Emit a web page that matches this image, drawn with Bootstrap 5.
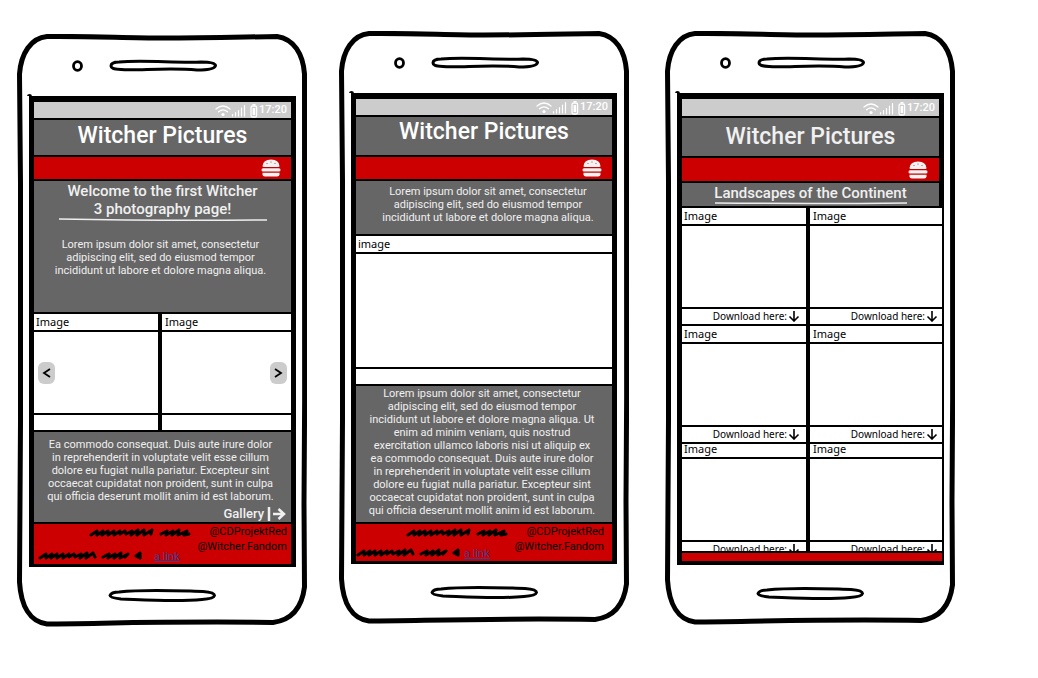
<!DOCTYPE html>
<html lang="en">
<head>
<meta charset="utf-8">
<meta name="viewport" content="width=device-width, initial-scale=1">
<title>Witcher Pictures</title>
<link href="https://cdn.jsdelivr.net/npm/bootstrap@5.3.0/dist/css/bootstrap.min.css" rel="stylesheet">
<style>
  body { font-family: Roboto, "Liberation Sans", sans-serif; background: #fff; color: #000; }
  .board { padding: 31px 83px 50px 17px; gap: 32px; }
  .phone { flex: 1 1 0; min-width: 0; }
  .drop { margin-top: 3px; }
  .outline { inset: 0; width: 100%; height: 100%; overflow: visible; }
  .hardware { display: block; width: 100%; }
  .hw-top { height: 62px; }
  .hw-bottom { height: 60px; }
  .screen { margin: 0 11px 0 12px; border: 5px solid #000; border-top-width: 6px; border-bottom-width: 3px; background: #666; color: #f0f0f0; }
  .wide .screen { margin-right: 12px; }
  .statusbar { height: 16px; background: #ccc; color: #fff; font-size: 11px; line-height: 16px; font-weight: 500; padding-right: 4px; gap: 1px; }
  .strip { border-top: 2px solid #000; }
  .title { height: 40px; }
  .title h1 { font-size: 23px; line-height: 30px; font-weight: 500; margin: 0; color: #fff; }
  .drop .title { height: 37px; }
  .drop h1 { line-height: 32px; }
  .redbar { height: 24px; background: #c00; padding-right: 10px; }
  .burger { background: none; border: 0; padding: 0; line-height: 0; }
  .copy { font-size: 11px; line-height: 13px; font-weight: 400; text-align: center; white-space: nowrap; margin: 0; }
  .intro { height: 133px; }
  .story { height: 90px; padding-top: 6px; }
  .excerpt { height: 55px; }
  .article { height: 136px; padding-top: 1px; }
  .caption { height: 25px; }
  .heading { font-size: 15px; line-height: 18px; font-weight: 500; padding-top: 1px; margin: 0; text-align: center; }
  .foot { background: #c00; color: #000; font-size: 11px; line-height: 15px; height: 42px; }
  .wide .foot { height: 39px; }
  .foot a { color: #3b3f8c; }
  .pair { display: grid; grid-template-columns: 124fr 129fr; gap: 0 4px; background: #000; }
  .tile { background: #fff; color: #000; border-top: 2px solid #000; font-family: "Noto Sans", sans-serif; font-size: 11px; display: flex; flex-direction: column; }
  .tile-head { height: 18px; line-height: 15px; padding-left: 2px; border-bottom: 2px solid #000; }
  .tile:nth-child(even) .tile-head { padding-left: 3px; }
  .tile-body { height: 81px; }
  .tile-foot { height: 17px; border-top: 2px solid #000; }
  .pair.closed { border-bottom: 2px solid #000; }
  .arrow { width: 17px; height: 22px; padding: 0; border: 0; border-radius: 6px; background: #ccc; line-height: 0; margin: 0 4px; }
  .hero .tile-body { height: 113px; }
  .hero { border-bottom: 2px solid #000; }
  .gallery-link { font-size: 13px; line-height: 14px; font-weight: 500; color: #f0f0f0; text-decoration: none; padding-right: 5px; gap: 3px; }
  .grid-wrap { height: 345px; overflow: hidden; }
  .spill { margin-right: -5px; border-right: 2px solid #000; }
  .spill .pair { grid-template-columns: 124fr 132fr; }
  .download { color: #000; text-decoration: none; line-height: 14px; font-size: 10px; padding-right: 6px; gap: 1px; }
  .tile:nth-child(even) .download { padding-right: 4px; }
  .late .tile-head { height: 15px; line-height: 10px; }
  .gallery .statusbar { height: 17px; }
  .gallery .redbar { height: 25px; padding-right: 11px; }
  .gallery h1 { line-height: 38px; color: #f0f0f0; }
  .gallery .screen { border-bottom-width: 4px; }
  .gallery .redline { height: 10px; background: #c00; }
</style>
</head>
<body>
<svg width="0" height="0" class="position-absolute" aria-hidden="true">
  <defs>
    <symbol id="outline" viewBox="0 0 290 593" preserveAspectRatio="none">
      <path d="M30 2.500C70 2 110 4 145 4C190 4 225 3 260 2.500C277 5 286 20 287.500 40C287 200 288.500 330 287 470C287 500 287.500 530 287.500 553C285 573 275 586 256 588.500C160 587 90 589.500 30 590C13 588 4 572 2.500 548C4 410 3.500 300 3.500 150C3 110 2.500 70 2.500 40C4 19 14 4 30 2.500Z" fill="none" stroke="#000" stroke-width="5"/>
    </symbol>
    <symbol id="hwtop" viewBox="0 0 290 62">
      <ellipse cx="60.500" cy="32" rx="4" ry="4.300" fill="none" stroke="#000" stroke-width="2.800"/>
      <path d="M102 28C125 26 160 29 184 28C194 28 198 29 198.500 31.500C198 35 190 36 180 36C150 33 120 37 104 35.500C96 35 94 34 94 32C94 29 97 28 102 28Z" fill="none" stroke="#000" stroke-width="3"/>
      <circle cx="12.500" cy="62.500" r="2.500"/>
    </symbol>
    <symbol id="hwbottom" viewBox="0 0 290 60">
      <path d="M102 25C130 22 165 24 186 24.500C194 25 197.500 26 197.500 28.500C197 31 193 32 185 32.500C160 35 130 33 104 32C96 31 93 30 93 28.500C94 26 97 25 102 25Z" fill="none" stroke="#000" stroke-width="3"/>
    </symbol>
    <symbol id="status" viewBox="0 0 43 16">
      <g fill="none" stroke="#fff" stroke-width="1.300" stroke-linecap="round">
        <path d="M1 7Q8 1 15 7M3.500 9.800Q8 6 12.500 9.800"/>
        <path d="M17.500 14V12.500M20.500 14V10.500M23.500 14V8.500M26.500 14V6M29.500 14V3.500" stroke-width="1.200"/>
        <rect x="36" y="4" width="5.600" height="11" rx="1.500"/>
        <path d="M38 2.600H40"/>
      </g>
      <circle cx="8" cy="12.500" r="1.600" fill="#fff"/>
      <rect x="37.600" y="6" width="2.600" height="7" fill="#fff"/>
    </symbol>
    <symbol id="burger" viewBox="0 0 20 18">
      <g fill="#f2f2f2">
        <path d="M1.500 7Q2 .5 10 .5T18.500 7Q18.500 8 17.500 8H2.500Q1.500 8 1.500 7Z"/>
        <rect x=".5" y="9.300" width="19" height="3.200" rx="1.500"/>
        <path d="M1.500 13.800H18.500V15.500Q18.500 17.500 16 17.500H4Q1.500 17.500 1.500 15.500Z"/>
      </g>
      <g fill="#b33"><circle cx="6" cy="4.500" r=".6"/><circle cx="10" cy="3" r=".6"/><circle cx="14" cy="4.500" r=".6"/></g>
    </symbol>
    <symbol id="scribble" viewBox="0 0 104 9">
      <path d="M2 7L8 3L8 7L14 3L13 7L19 3L19 7L25 3L25 7L31 3L31 6L36 3L37 6L43 3L42 7L49 2L48 7L55 2L55 7L63 2L62 6M72 6L78 3L77 7L84 3L83 7L90 2L89 7L98 3L95 7L100 6" fill="none" stroke="#000" stroke-width="3" stroke-linejoin="round" stroke-linecap="round"/>
    </symbol>
    <symbol id="scribble-short" viewBox="0 0 104 9">
      <path d="M2 7L8 3L8 7L14 3L13 7L19 3L19 7L25 3L25 7L31 3L31 6L36 3L37 6L43 3L42 7L49 2L48 7L55 2L57 6M65 6L71 3L70 7L77 3L76 7L83 2L82 7L90 3L87 6M102 2L98 5L102 7Z" fill="none" stroke="#000" stroke-width="3" stroke-linejoin="round" stroke-linecap="round"/>
    </symbol>
    <symbol id="down" viewBox="0 0 12 12">
      <path d="M6 1V11M1.500 6.500L6 11L10.500 6.500" fill="none" stroke="#000" stroke-width="1.600"/>
    </symbol>
  </defs>
</svg>

<main class="board d-flex align-items-start">

  <section class="phone drop position-relative">
    <svg class="outline position-absolute"><use href="#outline"/></svg>
    <svg class="hardware hw-top"><use href="#hwtop"/></svg>
    <div class="screen position-relative">
      <div class="statusbar d-flex justify-content-end align-items-center"><svg width="43" height="16"><use href="#status"/></svg><span>17:20</span></div>
      <header class="strip title text-center"><h1>Witcher Pictures</h1></header>
      <nav class="strip redbar d-flex justify-content-end align-items-center"><button class="burger" aria-label="Menu"><svg width="20" height="18"><use href="#burger"/></svg></button></nav>
      <div class="strip intro">
        <h2 class="heading">Welcome to the first Witcher<br>3 photography page!</h2>
        <svg class="d-block mx-auto" width="210" height="4"><path d="M1 1Q100 3 209 2" fill="none" stroke="#eee" stroke-width="1.500"/></svg>
        <p class="copy mt-3 pe-1">Lorem ipsum dolor sit amet, consectetur<br>adipiscing elit, sed do eiusmod tempor<br>incididunt ut labore et dolore magna aliqua.</p>
      </div>
      <div class="pair closed">
        <div class="tile"><div class="tile-head">Image</div><div class="tile-body d-flex align-items-center"><button class="arrow" aria-label="Previous"><svg width="11" height="12"><path d="M9 2L3 6L9 10" fill="none" stroke="#000" stroke-width="1.800"/></svg></button></div><div class="tile-foot"></div></div>
        <div class="tile"><div class="tile-head">Image</div><div class="tile-body d-flex align-items-center justify-content-end"><button class="arrow" aria-label="Next"><svg width="11" height="12"><path d="M2 2L8 6L2 10" fill="none" stroke="#000" stroke-width="1.800"/></svg></button></div><div class="tile-foot"></div></div>
      </div>
      <div class="story">
        <p class="copy pe-1">Ea commodo consequat. Duis aute irure dolor<br>in reprehenderit in voluptate velit esse cillum<br>dolore eu fugiat nulla pariatur. Excepteur sint<br>occaecat cupidatat non proident, sunt in culpa<br>qui officia deserunt mollit anim id est laborum.</p>
        <a class="gallery-link d-flex align-items-center justify-content-end mt-1" href="#gallery">Gallery <svg width="19" height="14"><path d="M2 0V14M6 7H17M11.500 2L17 7L11.500 12" fill="none" stroke="#f0f0f0" stroke-width="2.500"/></svg></a>
      </div>
      <footer class="strip foot d-flex">
        <div class="flex-grow-1 d-flex flex-column justify-content-between pt-1">
          <svg class="align-self-end" width="104" height="9"><use href="#scribble"/></svg>
          <div class="d-flex align-items-end ps-1"><svg class="mb-1" width="104" height="9"><use href="#scribble-short"/></svg><a class="ms-2 ps-1" href="#link">a link</a></div>
        </div>
        <div class="text-end pe-1 ps-1">@CDProjektRed<br>@Witcher.Fandom</div>
      </footer>
    </div>
    <svg class="hardware hw-bottom"><use href="#hwbottom"/></svg>
  </section>

  <section class="phone wide position-relative">
    <svg class="outline position-absolute"><use href="#outline"/></svg>
    <svg class="hardware hw-top"><use href="#hwtop"/></svg>
    <div class="screen position-relative">
      <div class="statusbar d-flex justify-content-end align-items-center"><svg width="43" height="16"><use href="#status"/></svg><span>17:20</span></div>
      <header class="strip title text-center"><h1>Witcher Pictures</h1></header>
      <nav class="strip redbar d-flex justify-content-end align-items-center"><button class="burger" aria-label="Menu"><svg width="20" height="18"><use href="#burger"/></svg></button></nav>
      <div class="strip pt-1 excerpt">
        <p class="copy ps-2">Lorem ipsum dolor sit amet, consectetur<br>adipiscing elit, sed do eiusmod tempor<br>incididunt ut labore et dolore magna aliqua.</p>
      </div>
      <div class="tile hero"><div class="tile-head">image</div><div class="tile-body"></div><div class="tile-foot"></div></div>
      <div class="article">
        <p class="copy pe-1">Lorem ipsum dolor sit amet, consectetur<br>adipiscing elit, sed do eiusmod tempor<br>incididunt ut labore et dolore magna aliqua. Ut<br>enim ad minim veniam, quis nostrud<br>exercitation ullamco laboris nisi ut aliquip ex<br>ea commodo consequat. Duis aute irure dolor<br>in reprehenderit in voluptate velit esse cillum<br>dolore eu fugiat nulla pariatur. Excepteur sint<br>occaecat cupidatat non proident, sunt in culpa<br>qui officia deserunt mollit anim id est laborum.</p>
      </div>
      <footer class="strip foot d-flex">
        <div class="flex-grow-1 d-flex flex-column justify-content-between pt-1">
          <svg class="align-self-end" width="104" height="9"><use href="#scribble"/></svg>
          <div class="d-flex align-items-end"><svg class="mb-1" width="104" height="9"><use href="#scribble-short"/></svg><a class="ms-1" href="#link">a link</a></div>
        </div>
        <div class="text-end pe-2 ps-1">@CDProjektRed<br>@Witcher.Fandom</div>
      </footer>
    </div>
    <svg class="hardware hw-bottom"><use href="#hwbottom"/></svg>
  </section>

  <section class="phone gallery position-relative ms-1" id="gallery">
    <svg class="outline position-absolute"><use href="#outline"/></svg>
    <svg class="hardware hw-top"><use href="#hwtop"/></svg>
    <div class="screen position-relative">
      <div class="statusbar d-flex justify-content-end align-items-center"><svg width="43" height="16"><use href="#status"/></svg><span>17:20</span></div>
      <header class="strip title text-center"><h1>Witcher Pictures</h1></header>
      <nav class="strip redbar d-flex justify-content-end align-items-center"><button class="burger" aria-label="Menu"><svg width="20" height="18"><use href="#burger"/></svg></button></nav>
      <div class="strip caption">
        <h2 class="heading">Landscapes of the Continent</h2>
        <svg class="d-block mx-auto" width="194" height="3"><path d="M1 1Q100 2 193 1" fill="none" stroke="#eee" stroke-width="1.500"/></svg>
      </div>
      <div class="spill">
        <div class="grid-wrap">
          <div class="pair">
            <div class="tile"><div class="tile-head">Image</div><div class="tile-body"></div><div class="tile-foot"><a class="download d-flex align-items-center justify-content-end" href="#d1">Download here:<svg width="12" height="12"><use href="#down"/></svg></a></div></div>
            <div class="tile"><div class="tile-head">Image</div><div class="tile-body"></div><div class="tile-foot"><a class="download d-flex align-items-center justify-content-end" href="#d2">Download here:<svg width="12" height="12"><use href="#down"/></svg></a></div></div>
            <div class="tile"><div class="tile-head">Image</div><div class="tile-body"></div><div class="tile-foot"><a class="download d-flex align-items-center justify-content-end" href="#d3">Download here:<svg width="12" height="12"><use href="#down"/></svg></a></div></div>
            <div class="tile"><div class="tile-head">Image</div><div class="tile-body"></div><div class="tile-foot"><a class="download d-flex align-items-center justify-content-end" href="#d4">Download here:<svg width="12" height="12"><use href="#down"/></svg></a></div></div>
            <div class="tile late"><div class="tile-head">Image</div><div class="tile-body"></div><div class="tile-foot"><a class="download d-flex align-items-center justify-content-end" href="#d5">Download here:<svg width="12" height="12"><use href="#down"/></svg></a></div></div>
            <div class="tile late"><div class="tile-head">Image</div><div class="tile-body"></div><div class="tile-foot"><a class="download d-flex align-items-center justify-content-end" href="#d6">Download here:<svg width="12" height="12"><use href="#down"/></svg></a></div></div>
          </div>
        </div>
        <footer class="strip redline"></footer>
      </div>
    </div>
    <svg class="hardware hw-bottom"><use href="#hwbottom"/></svg>
  </section>
</main>
<script src="https://cdn.jsdelivr.net/npm/bootstrap@5.3.0/dist/js/bootstrap.bundle.min.js"></script>
</body>
</html>
